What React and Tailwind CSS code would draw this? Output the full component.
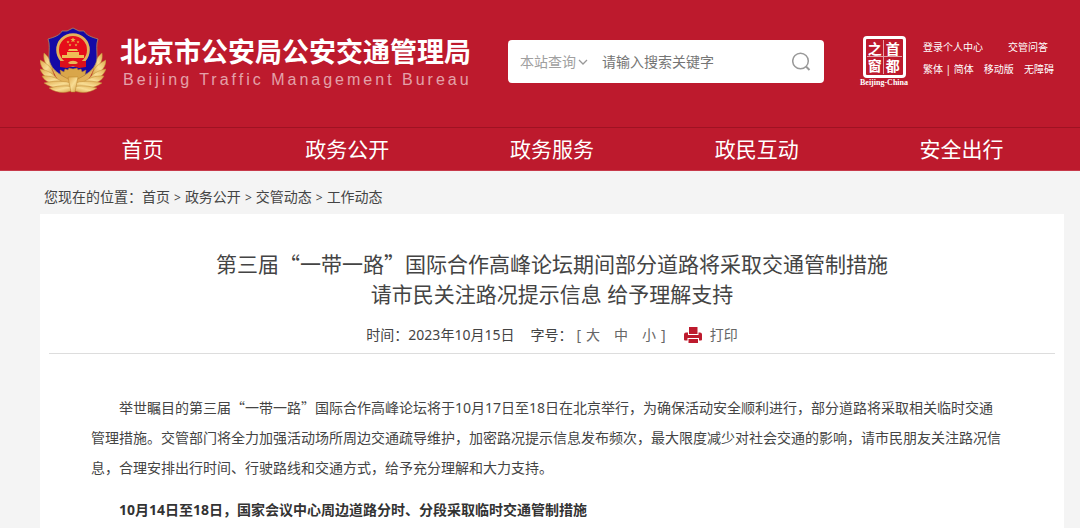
import { useState } from 'react';

const navItems = ['首页', '政务公开', '政务服务', '政民互动', '安全出行'];
const crumbs = ['首页', '政务公开', '交管动态', '工作动态'];
const sizes = ['大', '中', '小'];

// wheat leaves on the left half of the badge, mirrored for the right half
const leaves = [
    'M10 44 C5 38 3 33 4 27 C9 31 12 37 13 44 Z',
    'M12 50 C4 46 0 40 0 34 C7 37 13 43 14 49 Z',
    'M17 55 C8 54 2 49 0 43 C8 44 15 49 18 54 Z',
    'M22 58 C13 59 5 56 2 50 C11 49 19 53 24 57 Z',
    'M33 60 C24 64 12 63 4 57 C10 55 26 54 33 58 Z',
    'M33 64 C26 68 16 67 9 62 C16 60 26 59 33 61 Z',
];

function Star({ x, y, s }) {
    return (
        <path
            transform={`translate(${x} ${y}) scale(${s})`}
            d="M0 -3 L0.8 -1 L3 -1 L1.2 0.4 L1.9 2.6 L0 1.3 L-1.9 2.6 L-1.2 0.4 L-3 -1 L-0.8 -1 Z"
            fill="#e9b347"
        />
    );
}

function Leaves() {
    return leaves.map((d) => (
        <path key={d} d={d} fill="url(#gold)" stroke="#c08a35" strokeWidth="0.5" />
    ));
}

function PoliceBadge() {
    return (
        <svg viewBox="0 0 66 68" className="h-[68px] w-[66px] shrink-0" aria-hidden="true">
            <defs>
                <linearGradient id="gold" x1="0" y1="0" x2="1" y2="1">
                    <stop offset="0" stopColor="#dfa94c" />
                    <stop offset="0.5" stopColor="#f8dd94" />
                    <stop offset="1" stopColor="#d29c42" />
                </linearGradient>
            </defs>
            <path d="M12 42 C16 54 24 62 33 64 C42 62 50 54 54 42 Z" fill="#e3b35a" />
            <Leaves />
            <g transform="translate(66 0) scale(-1 1)">
                <Leaves />
            </g>
            <path
                d="M33 2 L27 5 H22 C20 9 15 11 8 13 C10 18 9 24 9 31 C9 41 17 49 33 54 C49 49 57 41 57 31 C57 24 56 18 58 13 C51 11 46 9 44 5 H39 Z"
                fill="#1409a6"
                stroke="#a58a6a"
                strokeWidth="0.8"
            />
            <circle cx="33" cy="24" r="15.4" fill="#e60d1a" stroke="#e3b25a" strokeWidth="2.8" />
            <Star x={33} y={14} s={0.9} />
            <Star x={28} y={16} s={0.5} />
            <Star x={38} y={16} s={0.5} />
            <Star x={30} y={19} s={0.5} />
            <Star x={36} y={19} s={0.5} />
            <path d="M29 23 H37 L38 25 H28 Z M27 26 H39 V29 H27 Z M22 29 H44 V32 H22 Z" fill="#efbd56" />
            <path d="M20 35 H46 V41 L39 42 L33 40 L27 42 L20 41 Z" fill="#db0f1b" />
            <path d="M28 37 C30 34 36 34 38 37 L36 38 H30 Z" fill="#e8b757" />
            <path
                d="M20 44 L24 46 L25 43 L28 44 L29 42 L33 43 L37 42 L38 44 L41 43 L42 46 L46 44 L45 49 L38 53 H28 L21 49 Z"
                fill="#d9a64a"
                stroke="#b98128"
                strokeWidth="0.5"
            />
            <path d="M28 51 L31 66 H35 L38 51 Z" fill="url(#gold)" stroke="#b98128" strokeWidth="0.5" />
        </svg>
    );
}

function CapitalSeal() {
    return (
        <a href="#beijing" className="flex w-12 shrink-0 flex-col items-center gap-px" aria-label="首都之窗">
            <span className="h-[42px] w-[43px] rounded-sm border-[3px] border-white p-px">
                <span className="grid h-full grid-cols-2 grid-rows-2 text-center font-['Noto_Sans_CJK_SC',sans-serif] text-[14px] leading-[16px] font-bold">
                    <span className="border-r border-b border-white/60">之</span>
                    <span className="border-b border-white/60">首</span>
                    <span className="border-r border-white/60">窗</span>
                    <span>都</span>
                </span>
            </span>
            <span className="font-['Liberation_Serif',serif] text-[8px] leading-[8px] font-bold whitespace-nowrap">Beijing-China</span>
        </a>
    );
}

function PrinterIcon() {
    return (
        <svg viewBox="0 0 18 17" className="h-[17px] w-[18px]" fill="#bd1a2d" aria-hidden="true">
            <path d="M5 0 H13.5 V7 H5 Z" />
            <path d="M2 5.5 H4 V8 H14.5 V5.5 H16 Q18 5.5 18 7.5 V12.5 Q18 13.5 17 13.5 H15 V11 H3.5 V13.5 H1 Q0 13.5 0 12.5 V7.5 Q0 5.5 2 5.5 Z" />
            <path d="M4.5 12 H14 V16 H4.5 Z" />
        </svg>
    );
}

// full-width Chinese quotation marks
function Quoted({ children }) {
    return <span className="font-['Noto_Sans_CJK_SC',sans-serif]">“{children}”</span>;
}

function Header() {
    const [keyword, setKeyword] = useState('');

    return (
        <header className="bg-[#bd1a2d] text-white">
            <div className="flex h-[127px] items-start pr-[26px] pl-10">
                <div className="flex flex-1 items-start gap-[14px] pt-[26px]">
                    <PoliceBadge />
                    <div className="pt-2 whitespace-nowrap">
                        <p className="text-[27px] leading-9 font-bold">北京市公安局公安交通管理局</p>
                        <p className="pl-[3px] font-['Liberation_Sans',sans-serif] text-base leading-5 tracking-[3px] text-white/60">
                            Beijing Traffic Management Bureau
                        </p>
                    </div>
                </div>

                <form
                    className="mt-10 flex h-[43px] w-[316px] shrink-0 items-center rounded bg-white px-3 text-sm"
                    onSubmit={(e) => e.preventDefault()}
                >
                    <select aria-label="查询范围" className="w-[58px] appearance-none bg-transparent text-[#a0a0a0] outline-none">
                        <option>本站查询</option>
                    </select>
                    <svg viewBox="0 0 10 6" className="h-[6px] w-[10px] shrink-0" fill="none" stroke="#999" strokeWidth="1.3" aria-hidden="true">
                        <path d="M1 1 L5 5 L9 1" />
                    </svg>
                    <input
                        type="text"
                        aria-label="搜索关键字"
                        placeholder="请输入搜索关键字"
                        value={keyword}
                        onChange={(e) => setKeyword(e.target.value)}
                        className="ml-[14px] min-w-0 flex-1 text-gray-700 outline-none placeholder:text-[#757575]"
                    />
                    <button type="submit" aria-label="搜索">
                        <svg viewBox="0 0 20 20" className="h-5 w-5" fill="none" stroke="#999" strokeWidth="1.5" aria-hidden="true">
                            <circle cx="8.5" cy="9" r="7.8" />
                            <path d="M14 14.5 L17.5 18" strokeWidth="2" />
                        </svg>
                    </button>
                </form>

                <div className="ml-9 flex w-[194px] shrink-0 gap-[15px] pt-9">
                    <CapitalSeal />
                    <div className="flex-1 text-[10px] leading-[22px] whitespace-nowrap">
                        <div className="flex justify-between pr-[6px]">
                            <a href="#login">登录个人中心</a>
                            <a href="#faq">交管问答</a>
                        </div>
                        <div className="flex justify-between">
                            <span><a href="#traditional">繁体</a> | <a href="#simplified">简体</a></span>
                            <a href="#mobile">移动版</a>
                            <a href="#accessible">无障碍</a>
                        </div>
                    </div>
                </div>
            </div>

            <nav className="border-t border-t-[#9f1222] border-b border-b-[#c73a4a] pr-4 pl-10">
                <ul className="grid grid-cols-5 text-center text-[21px] leading-[42px]">
                    {navItems.map((item) => (
                        <li key={item}>
                            <a href={`#${item}`}>{item}</a>
                        </li>
                    ))}
                </ul>
            </nav>
        </header>
    );
}

export default function App() {
    const [size, setSize] = useState('中');

    return (
        <div lang="zh-CN" className="flex min-h-screen flex-col bg-[#f4f4f4] font-['Noto_Sans','Noto_Sans_CJK_SC',sans-serif] text-[#444]">
            <Header />

            <main className="flex flex-1 flex-col pr-4 pl-10">
                <div className="flex h-[43px] items-center pt-2 pl-1 text-sm">
                    <span>您现在的位置：</span>
                    {crumbs.map((crumb, i) => (
                        <span key={crumb}>
                            {i > 0 && <span className="px-1 text-xs">&gt;</span>}
                            <a href={`#${crumb}`}>{crumb}</a>
                        </span>
                    ))}
                </div>

                <article className="flex-1 bg-white px-[9px] pt-[34px]">
                    <h1 className="text-center text-[21px] leading-[30px]">
                        第三届<Quoted>一带一路</Quoted>国际合作高峰论坛期间部分道路将采取交通管制措施
                        <br />
                        请市民关注路况提示信息 给予理解支持
                    </h1>

                    <div className="mt-[13px] flex h-8 items-start justify-center border-b border-[#ddd] text-sm leading-[26px]">
                        <span>时间：2023年10月15日</span>
                        <div className="ml-4 flex text-[#666]">
                            <span className="text-[#444]">字号：</span>
                            <span className="ml-1">[</span>
                            <div className="mx-[5px] flex gap-[14px]">
                                {sizes.map((s) => (
                                    <button key={s} type="button" aria-pressed={size === s} onClick={() => setSize(s)}>
                                        {s}
                                    </button>
                                ))}
                            </div>
                            <span>]</span>
                        </div>
                        <button type="button" className="ml-[18px] flex items-center gap-2 text-[#666]" onClick={() => window.print()}>
                            <PrinterIcon />
                            打印
                        </button>
                    </div>

                    <div className="pt-[38px] pr-[51px] pl-[42px] text-sm leading-[30px]">
                        <p className="indent-7">
                            举世瞩目的第三届<Quoted>一带一路</Quoted>国际合作高峰论坛将于10月17日至18日在北京举行，为确保活动安全顺利进行，部分道路将采取相关临时交通管理措施。交管部门将全力加强活动场所周边交通疏导维护，加密路况提示信息发布频次，最大限度减少对社会交通的影响，请市民朋友关注路况信息，合理安排出行时间、行驶路线和交通方式，给予充分理解和大力支持。
                        </p>
                        <p className="mt-3 indent-7 font-bold text-[#333]">10月14日至18日，国家会议中心周边道路分时、分段采取临时交通管制措施</p>
                    </div>
                </article>
            </main>
        </div>
    );
}
